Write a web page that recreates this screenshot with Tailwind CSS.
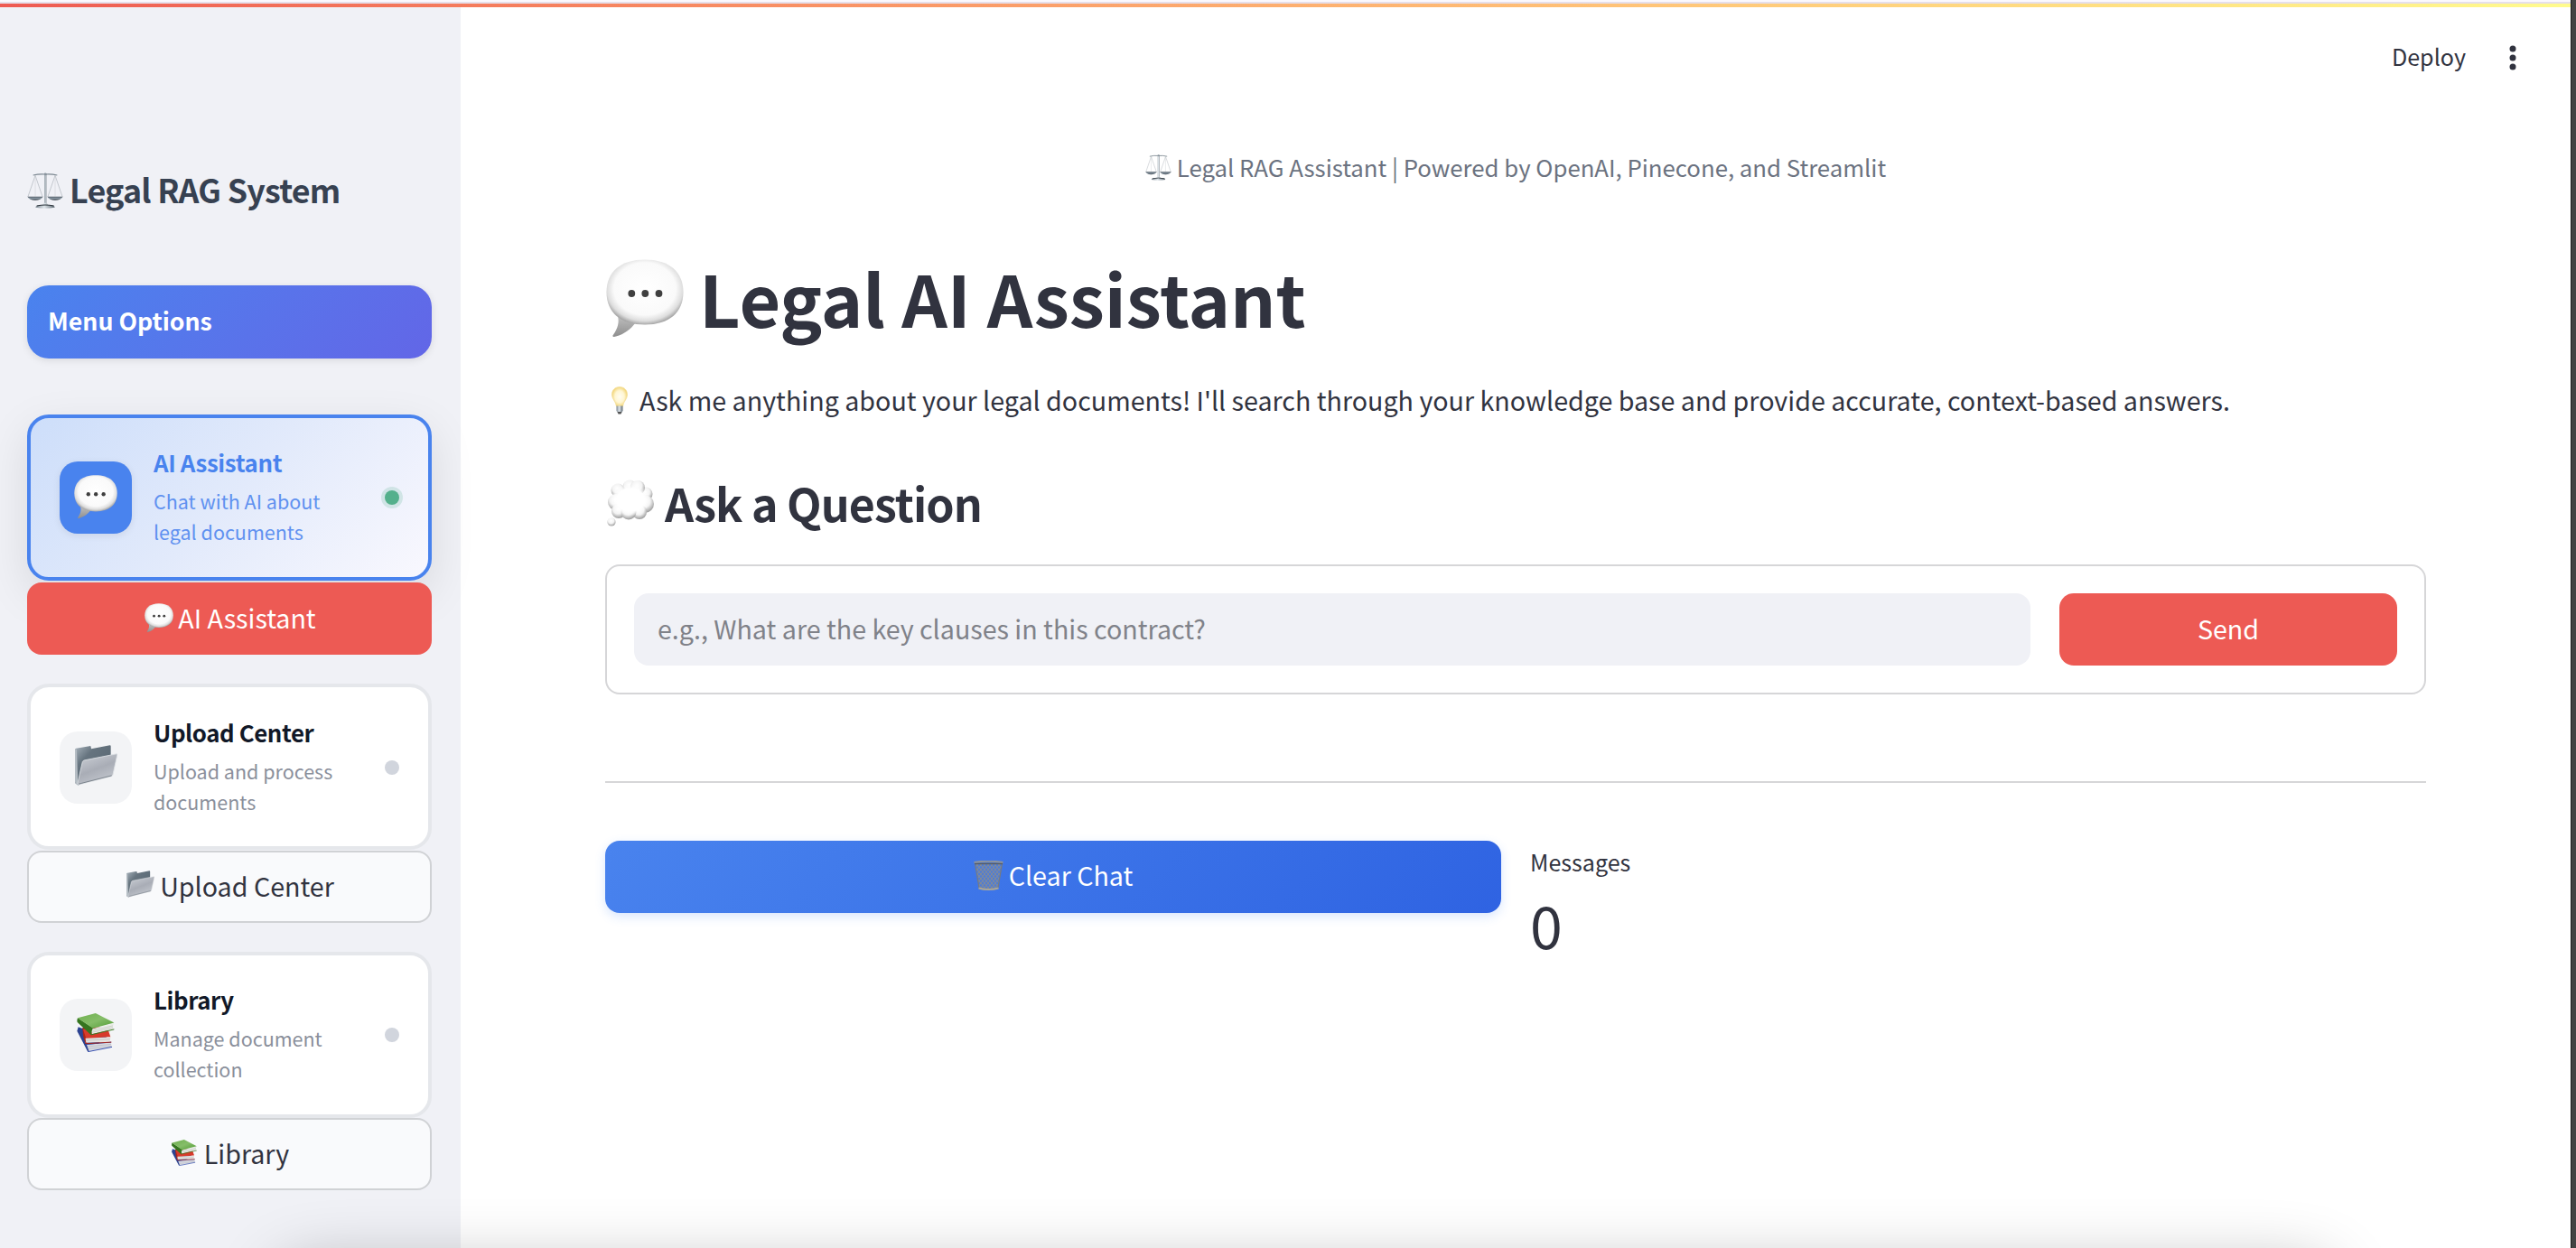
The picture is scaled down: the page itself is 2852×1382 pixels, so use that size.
<!DOCTYPE html>
<html lang="en">
<head>
<meta charset="utf-8">
<title>Legal AI Assistant</title>
<script src="https://cdn.jsdelivr.net/npm/@tailwindcss/browser@4"></script>
</head>
<body class="relative h-[1382px] w-[2852px] overflow-hidden bg-white font-['Noto_Sans_CJK_SC','Noto_Sans',sans-serif] text-[28.65px] text-[#31333f]">

<!-- Shared icon symbols -->
<svg class="absolute h-0 w-0" aria-hidden="true">
  <defs>
    <radialGradient id="bub" cx=".5" cy=".45" r=".56"><stop offset="0" stop-color="#fff"/><stop offset=".72" stop-color="#fafafa"/><stop offset=".88" stop-color="#dedede"/><stop offset="1" stop-color="#a0a0a0"/></radialGradient>
    <linearGradient id="tail" x1="0" y1="0" x2="0" y2="1"><stop offset="0" stop-color="#c4c4c4"/><stop offset="1" stop-color="#8f8f8f"/></linearGradient>
    <linearGradient id="fback" x1="0" y1="0" x2="1" y2="1"><stop offset="0" stop-color="#a9b4bd"/><stop offset=".3" stop-color="#66747f"/><stop offset="1" stop-color="#53626e"/></linearGradient>
    <linearGradient id="ffront" x1=".2" y1="0" x2=".7" y2="1"><stop offset="0" stop-color="#c9cdd4"/><stop offset=".5" stop-color="#a9adb6"/><stop offset="1" stop-color="#c6cad1"/></linearGradient>
    <linearGradient id="green" x1="0" y1="0" x2="1" y2="1"><stop offset="0" stop-color="#6fb050"/><stop offset=".5" stop-color="#85bd68"/><stop offset="1" stop-color="#4f9a33"/></linearGradient>
    <radialGradient id="cloud" cx=".45" cy=".35" r=".62"><stop offset="0" stop-color="#fff"/><stop offset=".55" stop-color="#f3f3f3"/><stop offset="1" stop-color="#a2a2a2"/></radialGradient>
    <radialGradient id="core" cx=".5" cy=".5" r=".5"><stop offset="0" stop-color="#fff"/><stop offset=".7" stop-color="#fff"/><stop offset="1" stop-color="#fff" stop-opacity="0"/></radialGradient>
    <radialGradient id="bulbg" cx=".5" cy=".5" r=".55"><stop offset="0" stop-color="#fffdf2"/><stop offset=".55" stop-color="#fff6d2"/><stop offset="1" stop-color="#f0cf68"/></radialGradient>
    <linearGradient id="metal" x1="0" y1="0" x2="1" y2="0"><stop offset="0" stop-color="#7c8791"/><stop offset=".45" stop-color="#dfe6eb"/><stop offset="1" stop-color="#5d6973"/></linearGradient>
    <linearGradient id="pan" x1="0" y1="0" x2="0" y2="1"><stop offset="0" stop-color="#4b5660"/><stop offset=".5" stop-color="#8c9aa6"/><stop offset="1" stop-color="#333c44"/></linearGradient>
    <pattern id="mesh" width="4" height="5" patternUnits="userSpaceOnUse"><path d="M0 0L4 5M4 0L0 5" stroke="#848b95" stroke-width="1"/></pattern>
  </defs>
  <symbol id="chat" viewBox="0 0 86 86">
    <path d="M12 60C16 70 12 78 7.500 84.500C7 86 9 86.200 11 85.500C20 83 27 78 33 70Z" fill="url(#tail)"/>
    <path d="M43 .5C70 .5 85.500 14 85.500 36.500C85.500 59 70 72.500 43 72.500C16 72.500 .5 59 .5 36.500C.5 14 16 .5 43 .5Z" fill="url(#bub)"/>
    <circle cx="28.300" cy="38" r="3.900" fill="#404040"/><circle cx="43.300" cy="38" r="3.900" fill="#404040"/><circle cx="58.500" cy="38" r="3.900" fill="#404040"/>
  </symbol>
  <symbol id="folder" viewBox="0 0 141 134">
    <path d="M0 15Q0 12 4 11L48 3Q53 2 53 6L54 12L116 0Q119 0 119 4L119 90L10 133L3 128Q0 126 0 122Z" fill="url(#fback)"/>
    <path d="M0 15L6 14L10 133L3 128Q0 126 0 122Z" fill="#b5bdc4"/>
    <path d="M25 55Q27 51 32 50L138 29Q142 29 140 34L126 98Q125 103 120 104L14 131Q8 132 9 126Z" fill="url(#ffront)" stroke="#dfe2e6" stroke-width="2.500"/>
    <path d="M12 129L122 101" stroke="#7e868f" stroke-width="3"/>
  </symbol>
  <symbol id="books" viewBox="0 0 125 130">
    <path d="M4 46L0 60L36 129L60 110L100 80Z" fill="#2c4391"/>
    <path d="M32 105L114 98L116 114L40 127Z" fill="#d9dbe2"/>
    <path d="M35 112L114 104M38 119L115 110" stroke="#a7aab5" stroke-width="1.500"/>
    <path d="M30 104L114 97M36 129L117 113" stroke="#354fae" stroke-width="3"/>
    <path d="M18 48L20 72L28 103L60 84L98 46Z" fill="#a8251b"/>
    <path d="M20 54L102 50L112 79L30 84Z" fill="#d83a2b"/>
    <path d="M28 84L112 80L110 96L28 99Z" fill="#e6e3e0"/>
    <path d="M29 91L110 87" stroke="#aaa" stroke-width="1.500"/>
    <path d="M22 74L30 102L115 97" stroke="#a8251b" stroke-width="3" fill="none"/>
    <path d="M2 16Q-1 24 1 30L47 73L54 50Z" fill="#35751f"/>
    <path d="M52 52L124 34Q118 42 122 53L50 70Q47 60 52 52Z" fill="#e9ebe6"/>
    <path d="M52 58L120 42M51 64L120 48" stroke="#b1b5ad" stroke-width="1.500"/>
    <path d="M62 0L124 32L53 51L2 16Z" fill="url(#green)"/>
    <path d="M47 72L124 54" stroke="#35751f" stroke-width="3"/>
  </symbol>
  <symbol id="scales" viewBox="0 0 120 118">
    <path d="M20 8Q40 3 60 5Q80 3 100 8" fill="none" stroke="#7b8790" stroke-width="3.500"/>
    <path d="M27 9L3 79M27 9L51 79M93 9L69 79M93 9L117 79" stroke="#9ba3aa" stroke-width="1.600"/>
    <path d="M27 9V78M93 9V78" stroke="#ced2d6" stroke-width="1.600"/>
    <path d="M1 79H53Q46 91 27 91Q8 91 1 79ZM67 79H119Q112 91 93 91Q74 91 67 79Z" fill="url(#pan)"/>
    <rect x="57" y="2" width="7" height="102" fill="url(#metal)"/>
    <circle cx="60.500" cy="4.500" r="4" fill="#87929b"/>
    <path d="M56 100H65L70 107Q92 108 92 115Q60 121 28 115Q28 108 51 107Z" fill="url(#metal)"/>
    <path d="M32 110Q60 104 89 110" fill="none" stroke="#2e363d" stroke-width="3.500"/>
  </symbol>
  <symbol id="thought" viewBox="0 0 52 52">
    <g fill="url(#cloud)">
      <circle cx="25" cy="8" r="7.500"/><circle cx="43" cy="16" r="7.500"/><circle cx="42" cy="27" r="10"/><circle cx="12" cy="12" r="7.500"/><circle cx="34" cy="9" r="8"/><circle cx="10" cy="25" r="9"/><circle cx="13" cy="35" r="8"/><circle cx="36" cy="36" r="8"/><circle cx="24" cy="36" r="8.500"/>
    </g>
    <ellipse cx="26" cy="22.500" rx="22" ry="18" fill="url(#core)"/>
    <circle cx="5" cy="47" r="4.600" fill="url(#cloud)"/>
  </symbol>
  <symbol id="bulb" viewBox="0 0 18 31">
    <path d="M9 .5C14 .5 17.500 4 17.500 9C17.500 14 13.500 16 12.500 22H5.500C4.500 16 .5 14 .5 9C.5 4 4 .5 9 .5Z" fill="url(#bulbg)" stroke="#f3dc93" stroke-width=".7"/>
    <path d="M5.500 21.500H12.500V27Q12 29 9 29Q6 29 5.500 27Z" fill="url(#metal)"/><path d="M6.500 28H11.500L10.500 30.500H7.500Z" fill="#555"/>
  </symbol>
  <symbol id="trash" viewBox="0 0 33 33">
    <path d="M1.500 3H31.500L27 30Q16 33 6 30Z" fill="#5c80c6" fill-opacity=".6"/>
    <path d="M1.500 3H31.500L27 30Q16 33 6 30Z" fill="url(#mesh)" stroke="#747a84" stroke-width="1.200"/>
    <path d="M.5 2Q16 -.5 32.500 2" fill="none" stroke="#8f959d" stroke-width="2.200"/><path d="M1 3.500H32" stroke="#555c66" stroke-width="1.300"/>
    <path d="M5.500 30.500Q16 33.500 27.500 30.500" fill="none" stroke="#a9a699" stroke-width="2"/>
  </symbol>
</svg>

<div class="flex h-full">
  <!-- Sidebar -->
  <aside class="flex w-[510px] shrink-0 flex-col bg-[#f0f1f6] pt-[185px] pr-8 pl-[30px]">
    <div class="flex h-12 items-center gap-[7px] text-[35.8px] leading-[48px] font-bold tracking-[-0.75px] whitespace-nowrap text-[#374151]">
      <svg class="mt-[3px] h-10 w-10"><use href="#scales"/></svg>
      <span>Legal RAG System</span>
    </div>
    <div class="mt-[83px] flex h-[81px] items-center rounded-3xl bg-linear-135 from-[#4983ee] to-[#6266e7] pb-[3px] pl-[23px] text-[26.7px] font-bold text-white shadow-[0_2px_8px_rgba(0,0,0,0.1)]">Menu Options</div>

    <div class="mt-[62px] flex h-[184px] items-center rounded-3xl border-4 border-[#4983ee] bg-linear-135 from-[#cddefa] via-[#e2eafb] to-[#f9f8fe] px-8 shadow-[0_16px_50px_rgba(0,0,0,0.1)]">
      <div class="flex size-20 shrink-0 items-center justify-center rounded-[20px] bg-[#4983ee] shadow-[0_2px_8px_rgba(0,0,0,0.08)]"><svg class="mb-[3px] size-12"><use href="#chat"/></svg></div>
      <div class="ml-6 flex-1 pb-px whitespace-nowrap">
        <div class="text-[25.8px] leading-[34px] font-bold tracking-[-0.35px] text-[#4983ee]">AI Assistant</div>
        <div class="mt-[9px] text-[21.5px] leading-[33.6px] text-[#5f91f0]">Chat with AI about<br>legal documents</div>
      </div>
      <div class="size-4 shrink-0 rounded-full bg-[#54b08c] ring-4 ring-[#54b08c]/20"></div>
    </div>
    <button class="relative mt-0.5 flex h-20 items-center justify-center gap-[5px] rounded-2xl bg-[#ed5a54] pb-px pl-0.5 text-white"><svg class="mb-0.5 size-8"><use href="#chat"/></svg><span>AI Assistant</span></button>

    <div class="mt-8 flex h-[184px] items-center rounded-3xl border-4 border-[#e5e7eb] bg-white px-8">
      <div class="mt-px flex size-20 shrink-0 items-center justify-center rounded-[20px] bg-[#f3f4f6]"><svg class="mb-1 h-[45px] w-[47px]"><use href="#folder"/></svg></div>
      <div class="ml-6 flex-1 whitespace-nowrap">
        <div class="text-[25.8px] leading-[34px] font-bold tracking-[-0.4px] text-[#111827]">Upload Center</div>
        <div class="mt-[9px] text-[21.5px] leading-[33.6px] text-[#8a8f9b]">Upload and process<br>documents</div>
      </div>
      <div class="mt-px size-4 shrink-0 rounded-full bg-[#d1d5dd]"></div>
    </div>
    <button class="mt-px flex h-20 items-center justify-center gap-1.5 rounded-2xl border-2 border-[#d0d2d5] bg-[#f9fafc] pb-0.5 pl-0.5"><svg class="mb-1 h-[30px] w-[31px]"><use href="#folder"/></svg><span>Upload Center</span></button>

    <div class="mt-8 flex h-[184px] items-center rounded-3xl border-4 border-[#e5e7eb] bg-white px-8">
      <div class="flex size-20 shrink-0 items-center justify-center rounded-[20px] bg-[#f3f4f6]"><svg class="mb-1.5 h-[43px] w-[42px]"><use href="#books"/></svg></div>
      <div class="ml-6 flex-1 pb-px whitespace-nowrap">
        <div class="text-[25.8px] leading-[34px] font-bold tracking-[-0.4px] text-[#111827]">Library</div>
        <div class="mt-[9px] text-[21.5px] leading-[33.6px] text-[#8a8f9b]">Manage document<br>collection</div>
      </div>
      <div class="size-4 shrink-0 rounded-full bg-[#d1d5dd]"></div>
    </div>
    <button class="flex h-20 items-center justify-center gap-2 rounded-2xl border-2 border-[#d0d2d5] bg-[#f9fafc] pb-px pl-0.5"><svg class="mb-0.5 h-[29px] w-[28px]"><use href="#books"/></svg><span>Library</span></button>
  </aside>

  <!-- Main area -->
  <main class="flex flex-1 flex-col">
    <header class="flex h-[126px] items-center justify-end gap-12 pr-[60px] text-[25.1px]">
      <span>Deploy</span>
      <svg class="mt-0.5 h-7 w-2" viewBox="0 0 8 28" fill="#31333f"><circle cx="4" cy="4" r="3.500"/><circle cx="4" cy="14" r="3.500"/><circle cx="4" cy="24" r="3.500"/></svg>
    </header>
    <div class="mt-[39px] ml-[160px] w-[2016px]">
      <div class="flex h-10 items-center justify-center gap-1.5 text-[25.75px] text-[#6b7280]"><svg class="size-[29px]"><use href="#scales"/></svg><span>Legal RAG Assistant | Powered by OpenAI, Pinecone, and Streamlit</span></div>
      <h1 class="mt-[71px] flex h-[106px] items-center text-[78.9px] leading-[106px] font-bold"><svg class="mt-0.5 mr-[17px] ml-px size-[86px]"><use href="#chat"/></svg><span>Legal AI Assistant</span></h1>
      <p class="mt-[35px] flex h-[52px] items-center leading-[52px]"><svg class="mt-px mr-[13px] ml-[7px] h-[31px] w-[18px]"><use href="#bulb"/></svg><span>Ask me anything about your legal documents! I'll search through your knowledge base and provide accurate, context-based answers.</span></p>
      <h2 class="mt-[53px] flex h-[68px] items-center text-[50.1px] leading-[68px] font-bold tracking-[-0.9px]"><svg class="mt-0.5 mr-3 ml-0.5 size-[52px]"><use href="#thought"/></svg><span>Ask a Question</span></h2>
      <form class="mt-[35px] flex h-36 items-center gap-8 rounded-2xl border-2 border-[#d6d6d8] px-[30px]">
        <div class="flex h-20 flex-1 items-center rounded-2xl bg-[#f0f1f6] pb-px pl-[26px] text-[#808289]">e.g., What are the key clauses in this contract?</div>
        <button type="button" class="flex h-20 w-[374px] items-center justify-center rounded-2xl bg-[#ed5a54] pb-0.5 text-white">Send</button>
      </form>
      <div class="mt-24 h-0.5 bg-[#d6d6d8]"></div>
      <div class="mt-16 flex items-start gap-8">
        <button class="flex h-20 w-[992px] items-center justify-center gap-1.5 rounded-2xl bg-linear-135 from-[#4983ee] to-[#2f63e2] pb-[3px] text-white shadow-[0_4px_12px_rgba(59,130,246,0.2)]"><svg class="size-[33px]"><use href="#trash"/></svg><span>Clear Chat</span></button>
        <div class="flex flex-col pt-[3px]">
          <span class="text-[25.1px] leading-10">Messages</span>
          <span class="mt-[5px] text-[64.5px] leading-[88px]">0</span>
        </div>
      </div>
    </div>
  </main>

  <!-- Edge of the neighbouring window -->
  <div class="w-1.5 shrink-0 border-l border-[#1c1c1c] bg-[#434343]"></div>
</div>

<!-- Loading stripe -->
<div class="absolute top-0 left-0 w-[2846px]">
  <div class="h-0.5 bg-[#fbf9fe]"></div>
  <div class="h-0.5 bg-[#e6dfea]"></div>
  <div class="h-1 bg-linear-to-r from-[#ee5a52] to-[#fffb8e]"></div>
</div>

<!-- Soft shadow rising from below the window -->
<div class="absolute bottom-0 left-0 h-[120px] w-[2846px] overflow-hidden">
  <div class="mt-[142px] ml-[310px] h-[200px] w-[2270px] rounded-[30px] shadow-[0_0_72px_rgba(0,0,0,0.3)]"></div>
</div>
</body>
</html>
